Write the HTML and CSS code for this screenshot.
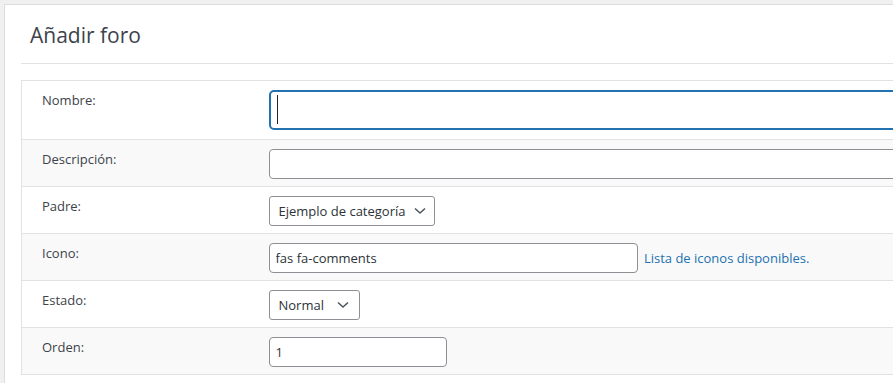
FILE: index.html
```html
<!DOCTYPE html>
<html lang="es">

    <head>
        <meta charset="UTF-8">
        <meta name="viewport" content="width=device-width, initial-scale=1.0">
        <title>Añadir foro</title>
        <link rel="stylesheet" href="styles.css">
    </head>

    <body>
        <div class="panel">
            <h1 class="panel-title">Añadir foro</h1>
            <form class="forum-form">
                <table class="form-table">
                    <tr class="row-tall">
                        <th><label for="name">Nombre:</label></th>
                        <td>
                            <div class="caret-wrap">
                                <input type="text" id="name" class="field field-focus wide">
                                <span class="caret"></span>
                            </div>
                        </td>
                    </tr>
                    <tr class="row-alt">
                        <th><label for="description">Descripción:</label></th>
                        <td><input type="text" id="description" class="field wide"></td>
                    </tr>
                    <tr>
                        <th><label for="parent">Padre:</label></th>
                        <td>
                            <div class="select select-parent">
                                <span>Ejemplo de categoría</span>
                                <svg class="chevron" viewBox="0 0 12 8" width="12" height="8"><path d="M1 1.5l5 4.5 5-4.5" fill="none" stroke="#50575e" stroke-width="1.6"/></svg>
                            </div>
                        </td>
                    </tr>
                    <tr class="row-alt">
                        <th><label for="icon">Icono:</label></th>
                        <td>
                            <input type="text" id="icon" class="field field-icon" value="fas fa-comments">
                            <a href="#" class="icon-link">Lista de iconos disponibles.</a>
                        </td>
                    </tr>
                    <tr>
                        <th><label for="status">Estado:</label></th>
                        <td>
                            <div class="select select-status">
                                <span>Normal</span>
                                <svg class="chevron" viewBox="0 0 12 8" width="12" height="8"><path d="M1 1.5l5 4.5 5-4.5" fill="none" stroke="#50575e" stroke-width="1.6"/></svg>
                            </div>
                        </td>
                    </tr>
                    <tr class="row-alt">
                        <th><label for="order">Orden:</label></th>
                        <td><input type="text" id="order" class="field field-order" value="1"></td>
                    </tr>
                </table>
            </form>
        </div>
    </body>

</html>
```

FILE: styles.css
```css
body {
    margin: 0;
    background: #f0f0f1;
    font-family: "Open Sans", Arial, sans-serif;
    font-size: 13px;
    color: #3c434a;
    overflow: hidden;
}

.panel {
    width: 1200px;
    height: 400px;
    margin: 4px 0 0 4px;
    background: #fff;
    border: 1px solid #dcdcde;
}

.panel-title {
    margin: 0 0 0 16px;
    padding: 17px 0 14px 9px;
    font-size: 21px;
    font-weight: 400;
    line-height: 27px;
    color: #3c434a;
    border-bottom: 1px solid #e2e2e2;
}

.forum-form {
    margin: 16px 0 0 16px;
}

.form-table {
    width: 1100px;
    table-layout: fixed;
    border-collapse: collapse;
    border: 1px solid #e2e2e2;
}

.form-table tr {
    height: 47px;
    border-top: 1px solid #e2e2e2;
}

.form-table .row-tall {
    height: 59px;
}

.form-table .row-alt {
    background: #f9f9f9;
}

.form-table th {
    box-sizing: border-box;
    width: 237px;
    padding: 9px 10px 0 20px;
    text-align: left;
    vertical-align: top;
    font-weight: 400;
    line-height: 20px;
}

.form-table td {
    padding: 9px 0 0 10px;
    vertical-align: top;
}

.field {
    box-sizing: border-box;
    height: 30px;
    padding: 0 6px;
    border: 1px solid #8c8f94;
    border-radius: 4px;
    font-family: inherit;
    font-size: 13px;
    color: #2c3338;
    background: #fff;
    vertical-align: middle;
}

.wide {
    width: 900px;
}

.caret-wrap {
    position: relative;
}

.field-focus {
    display: block;
    height: 40px;
    border: 2px solid #2271b1;
    border-radius: 5px;
}

.caret {
    position: absolute;
    left: 8px;
    top: 5px;
    width: 1px;
    height: 29px;
    background: #1d2327;
}

.field-icon {
    width: 369px;
}

.field-order {
    width: 178px;
}

.icon-link {
    margin-left: 3px;
    color: #2271b1;
    text-decoration: none;
    vertical-align: middle;
}

.select {
    box-sizing: border-box;
    display: inline-flex;
    align-items: center;
    justify-content: space-between;
    height: 30px;
    padding: 0 8px 0 9px;
    border: 1px solid #8c8f94;
    border-radius: 3px;
    background: #fff;
    color: #2c3338;
}

.select-parent {
    width: 166px;
}

.select-status {
    width: 91px;
    padding-right: 10px;
}

.chevron {
    display: block;
}
```
